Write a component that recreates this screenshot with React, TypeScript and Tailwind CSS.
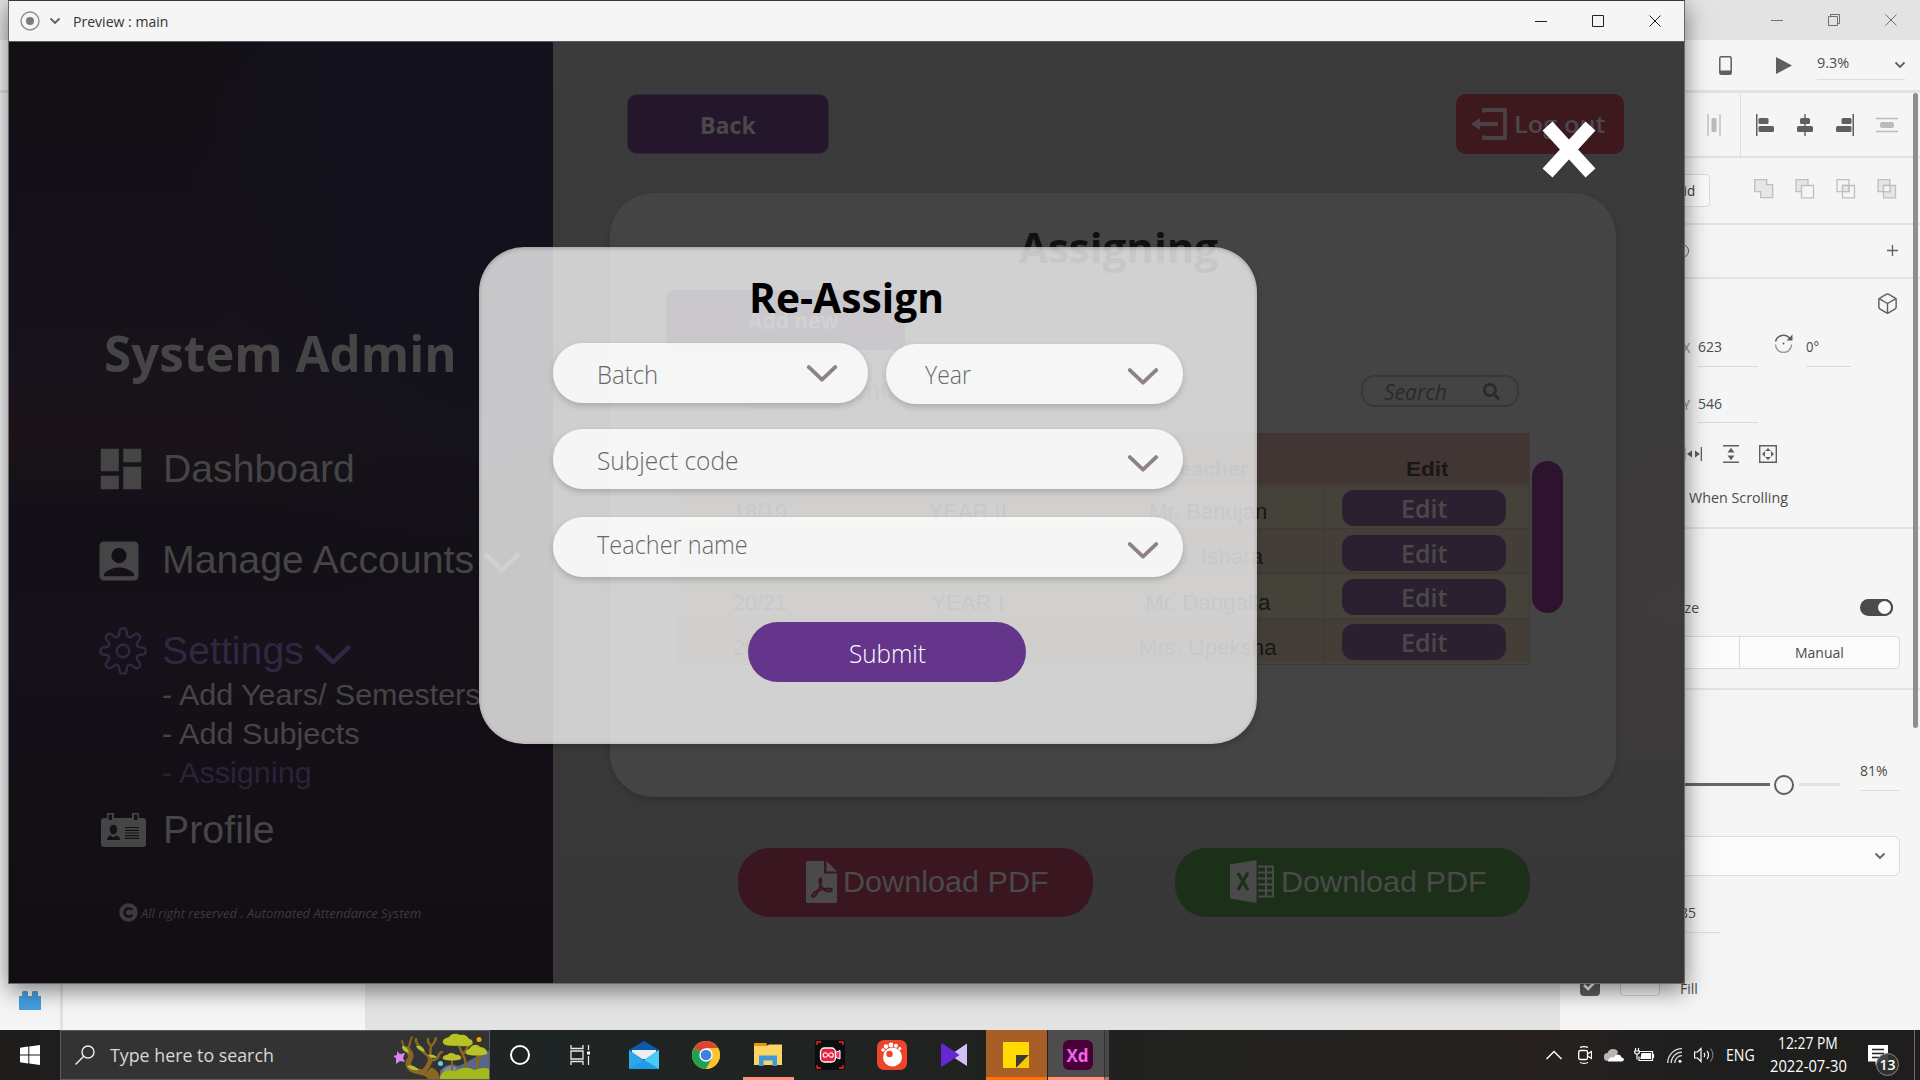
import { useLayoutEffect, useRef, useState } from "react";
import type { ReactNode } from "react";
import { Box } from "lucide-react";
import { MdDashboard, MdAccountBox } from "react-icons/md";
import { FaCopyright, FaSearch } from "react-icons/fa";

const cx = (...parts: (string | undefined | false)[]) => parts.filter(Boolean).join(" ");

/** One line of text condensed or stretched to a given width. */
function Fit({ w, className, children }: { w: number; className?: string; children: ReactNode }) {
  const ref = useRef<HTMLSpanElement>(null);
  const [scale, setScale] = useState(1);
  useLayoutEffect(() => {
    if (ref.current && ref.current.offsetWidth) setScale(w / ref.current.offsetWidth);
  }, [w]);
  return (
    <span className={cx("block shrink-0 whitespace-nowrap", className)} style={{ width: w }}>
      <span ref={ref} className="inline-block origin-left" style={{ transform: `scaleX(${scale})` }}>
        {children}
      </span>
    </span>
  );
}

const segoe = "font-['Open_Sans','Noto_Sans',sans-serif]";
const arial = "font-['Liberation_Sans',Arial,sans-serif]";

/* ------------------------------------------------------------------ icons */

function Chevron({ className, sw = 4 }: { className: string; sw?: number }) {
  return (
    <svg viewBox="0 0 36 20" className={cx("shrink-0", className)} fill="none" stroke="currentColor" strokeWidth={sw} strokeLinecap="round" strokeLinejoin="round">
      <path d="M2.5 2.5 18 17.2 33.5 2.5" />
    </svg>
  );
}

function SmallChevron({ className }: { className?: string }) {
  return (
    <svg viewBox="0 0 12 8" className={cx("h-2 w-3 shrink-0", className)} fill="none" stroke="#5f5f5f" strokeWidth="1.8">
      <path d="M1.5 1.5 6 6l4.500-4.500" />
    </svg>
  );
}

function WindowControls({ restore, className }: { restore?: boolean; className?: string }) {
  return (
    <div className={cx("flex items-center gap-[45px]", className)}>
      <svg className="size-3" viewBox="0 0 12 12" stroke="currentColor" fill="none"><path d="M0 6.500h12" /></svg>
      <svg className="size-3" viewBox="0 0 12 12" stroke="currentColor" fill="none">
        {restore ? <path d="M.5 2.500h9v9h-9zM2.500 2.500v-2h9v9h-2" /> : <path d="M.5.5h11v11H.5z" />}
      </svg>
      <svg className="size-3" viewBox="0 0 12 12" stroke="currentColor" fill="none"><path d="m.5.5 11 11m0-11-11 11" /></svg>
    </div>
  );
}

const gearPath = (() => {
  let d = "";
  for (let i = 0; i <= 240; i++) {
    const t = (i / 240) * Math.PI * 2;
    const r = 18.900 + 3.700 * (Math.tanh(1.800 * Math.cos(8 * t)) / 0.947);
    d += `${i ? "L" : "M"}${(24 + r * Math.cos(t)).toFixed(2)} ${(24 + r * Math.sin(t)).toFixed(2)}`;
  }
  return d + "Z";
})();

function Gear() {
  return (
    <svg viewBox="0 0 48 48" className="size-12 shrink-0" fill="none" stroke="currentColor" strokeWidth="2.4">
      <path d={gearPath} />
      <circle cx="24" cy="24" r="6.300" />
    </svg>
  );
}

function IdCard() {
  return (
    <svg viewBox="0 0 45 34" className="h-[34px] w-[45px] shrink-0">
      <path fill="#454545" d="M3 5h3V0h7v5h18V0h7v5h4a3 3 0 0 1 3 3v23a3 3 0 0 1-3 3H3a3 3 0 0 1-3-3V8a3 3 0 0 1 3-3z" />
      <path fill="#15101a" d="M7.500 1.500h3.500V7H7.500zM33 1.500h3.500V7H33z" />
      <ellipse cx="12.500" cy="16.500" rx="3.700" ry="4.800" fill="#15101a" />
      <path fill="#15101a" d="M6 27c0-3 2-4 4-4.500l2.500 2 2.500-2c2 .5 4 1.500 4 4.500z" />
      <path stroke="#15101a" strokeWidth="1.200" d="M24 14.500h14M24 17.300h14M24 20h14M24 22.700h14M24 25.300h14" />
    </svg>
  );
}

function PdfIcon() {
  return (
    <svg viewBox="0 0 31 42" className="h-[42px] w-[31px] shrink-0">
      <path fill="#4a4a4a" d="M1.500 0H18v12.500h13V40.500a1.500 1.500 0 0 1-1.500 1.500h-28A1.500 1.500 0 0 1 0 40.500v-39A1.500 1.500 0 0 1 1.500 0z" />
      <path fill="#4a4a4a" d="M20.500 0 31 10.500H20.500z" />
      <path fill="none" stroke="#3a1620" strokeWidth="2" strokeLinejoin="round" d="M14.500 17.500c-1.800 0-1.300 4 .2 6.800 1.500 3 4.500 6 8.500 6.200 3.500 0 3.500-3-.2-3-4 0-9 1-12.500 2.700-4 2-5.500 5.300-3.700 5.600 2 .2 4.700-4 6.500-8.500 1.500-3.500 3-9.800 1.200-9.800z" />
    </svg>
  );
}

function ExcelIcon() {
  return (
    <svg viewBox="0 0 44 43" className="h-[43px] w-11 shrink-0">
      <path fill="#4a4a4a" d="M0 4.500 26.500 0v43L0 38.500z" />
      <path fill="none" stroke="#1c3019" strokeWidth="3.200" d="m8 13 10 17M18 12.500 8 30" />
      <path fill="none" stroke="#4a4a4a" strokeWidth="2" d="M28 6.500h15v30H28M28 12.500h15M28 18.500h15M28 24.500h15M28 30.500h15M36 6.500v30" />
    </svg>
  );
}

function LogoutIcon() {
  return (
    <svg viewBox="0 0 36 32" className="h-8 w-9 shrink-0" fill="none" stroke="#4a4244" strokeWidth="3.800">
      <path d="M13 4.500V2h21v28H13v-2.500M27 16H7" />
      <path d="M0 16 9 10v12z" fill="#4a4244" stroke="none" />
    </svg>
  );
}

/* ------------------------------------------------- Adobe XD in the back */

const Hr = () => <div className="h-0.5 shrink-0 bg-[#e2e2e2]" />;

function PropertyPanel() {
  return (
    <aside className={cx("flex w-[360px] shrink-0 flex-col bg-[#f5f5f5] text-[14px] text-[#4b4b4b]", segoe)}>
      <div className="flex h-[63px] shrink-0 items-center pl-[147px]">
        <svg className="h-[22px] w-3.5" viewBox="0 0 14 22"><path d="M1 0v22M13 0v22" stroke="#bbb" strokeWidth="1.300" /><rect x="4.500" y="4" width="5" height="14" rx="1.500" fill="#bbb" /></svg>
        <div className="ml-[19px] h-full w-px bg-[#dedede]" />
        <div className="ml-[15px] flex items-center gap-[22px]">
          <svg className="h-[22px] w-[18px]" viewBox="0 0 18 22" fill="#5f5f5f"><path d="M0 0h1.500v22H0z" /><rect x="2.500" y="4" width="10" height="6" rx="1.500" /><rect x="2.500" y="12" width="15.500" height="6" rx="1.500" /></svg>
          <svg className="h-[22px] w-[18px]" viewBox="0 0 18 22" fill="#5f5f5f"><path d="M8.300 0h1.400v22H8.300z" /><rect x="4" y="4" width="10" height="6" rx="1.500" /><rect x="1" y="12" width="16" height="6" rx="1.500" /></svg>
          <svg className="h-[22px] w-[18px]" viewBox="0 0 18 22" fill="#5f5f5f"><path d="M16.500 0H18v22h-1.500z" /><rect x="5.500" y="4" width="10" height="6" rx="1.500" /><rect x="0" y="12" width="15.500" height="6" rx="1.500" /></svg>
          <svg className="h-[22px] w-[22px]" viewBox="0 0 22 22"><path d="M0 4.500h22M0 17.500h22" stroke="#bbb" strokeWidth="1.300" /><rect x="4" y="8" width="14" height="6" rx="2" fill="#bbb" /></svg>
        </div>
      </div>
      <Hr />
      <div className="flex h-[65px] shrink-0 items-center">
        <div className="flex h-[33px] w-[150px] items-center justify-end rounded border border-[#dcdcdc] bg-[#fbfbfb] pr-3.5 text-[14.5px] text-[#3c3c3c]"><Fit w={74}>Repeat Grid</Fit></div>
        <svg className="-mt-1 ml-[44px] h-5 w-[144px]" viewBox="0 0 144 20" stroke="#bfbfbf" strokeWidth="1.300" fill="#e6e6e6">
          <path d="M.7.7h12v5h6v13h-12v-6h-6z" />
          <path d="M42 .7h12v12H42z" /><path d="M47.500 6.500h12v12.300h-12z" fill="#f5f5f5" />
          <path d="M83 .7h12v12H83z" fill="none" /><path d="M88.500 6.500h12v12.300h-12z" fill="none" /><path d="M88.500 6.500H95v6.200h-6.500z" />
          <path d="M124 .7h12v12h-12zM129.500 6.500h12v12.300h-12z" /><path d="M129.500 6.500h6.500v6.200h-6.500z" fill="#f5f5f5" />
        </svg>
      </div>
      <Hr />
      <div className="flex h-[52px] shrink-0 items-center">
        <span className="ml-[115px] size-3.5 rounded-full border border-[#5f5f5f]" />
        <svg className="ml-[198px] size-[11px] -mt-0.5" viewBox="0 0 11 11" stroke="#5f5f5f" strokeWidth="1.300"><path d="M5.500 0v11M0 5.500h11" /></svg>
      </div>
      <Hr />
      <div className="flex h-12 shrink-0 items-center justify-end pr-[21px]">
        <Box className="size-[23px]" color="#5f5f5f" strokeWidth={1.500} />
      </div>
      <div className="flex h-10 shrink-0 items-center">
        <Fit w={7} className="ml-[123px] text-[#8b8b8b]">X</Fit>
        <div className="ml-2 flex h-10 w-[60px] items-center border-b border-[#d9d9d9]"><Fit w={24}>623</Fit></div>
        <svg viewBox="0 0 19 19" className="ml-4 -mt-2 size-[19px]" fill="none" stroke="#5f5f5f" strokeWidth="1.400"><path d="M1.500 7.500A8 8 0 0 1 16 5" /><path d="M17.500 10.500A8 8 0 0 1 1.500 10.500" stroke="#999" /><path d="M18.500.5v6h-6z" fill="#5f5f5f" stroke="none" /><circle cx="9.500" cy="9.500" r="1" fill="#5f5f5f" stroke="none" /></svg>
        <div className="ml-[13px] flex h-10 w-[45px] items-center border-b border-[#d9d9d9]"><Fit w={13}>0°</Fit></div>
      </div>
      <div className="mt-[18px] flex h-[38px] shrink-0 items-center">
        <Fit w={7} className="ml-[123px] text-[#8b8b8b]">Y</Fit>
        <div className="ml-2 flex h-[38px] w-[60px] items-center border-b border-[#d9d9d9]"><Fit w={24}>546</Fit></div>
      </div>
      <div className="mt-[22px] flex h-[18px] shrink-0 items-center pl-[124px]">
        <svg className="h-[18px] w-[18px]" viewBox="0 0 18 18" fill="#5f5f5f"><path d="M0 2h1.300v14H0zM16.700 2H18v14h-1.300zM8 5.500v7L3 9zM11 5.500v7L16 9z" /></svg>
        <svg className="ml-[21px] h-[18px] w-4" viewBox="0 0 16 18" fill="#5f5f5f"><path d="M0 0h16v1.500H0zM0 16.500h16V18H0zM4.500 7.500h7L8 2.800zM4.500 10.500h7L8 15.200z" /></svg>
        <svg className="ml-[20px] size-[18px]" viewBox="0 0 18 18" fill="#5f5f5f"><path d="M.7.7h16.600v16.600H.7z" fill="none" stroke="#5f5f5f" strokeWidth="1.400" /><path d="M6 6h6L9 3zM6 12h6l-3 3zM6 6v6L3 9zM12 6v6l3-3z" /></svg>
      </div>
      <div className="mt-[25px] flex h-[18px] shrink-0 items-center pl-[129px]"><Fit w={99}>When Scrolling</Fit></div>
      <div className="mt-[21px]"><Hr /></div>
      <div className="mt-[69px] flex h-[18px] shrink-0 items-center">
        <div className="w-[139px] text-right">Responsive Resize</div>
        <div className="ml-[161px] flex h-[17px] w-[33px] justify-end rounded-full bg-[#4b4b4b]"><span className="size-[17px] rounded-full border-2 border-[#4b4b4b] bg-[#f9f9f9]" /></div>
      </div>
      <div className="mt-5 flex h-[33px] w-[340px] shrink-0 rounded border border-[#dcdcdc] bg-[#fbfbfb]">
        <div className="w-[179px] border-r border-[#dcdcdc]" />
        <div className="flex flex-1 items-center justify-center"><Fit w={49}>Manual</Fit></div>
      </div>
      <div className="mt-[19px]"><Hr /></div>
      <div className="mt-[74px] flex h-[27px] shrink-0 items-start">
        <div className="mt-[19px] flex items-center">
          <div className="h-[3px] w-[210px] bg-[#666]" />
          <div className="-my-3 ml-1 size-5 rounded-full border-2 border-[#5f5f5f]" />
          <div className="ml-[5px] h-[3px] w-[41px] bg-[#e2e2e2]" />
        </div>
        <div className="ml-5 h-[27px] w-10 border-b border-[#dcdcdc]"><Fit w={28} className="-mt-[3px] leading-5">81%</Fit></div>
      </div>
      <div className="mt-[45px] flex h-10 w-[340px] shrink-0 items-center justify-end rounded-md border border-[#dcdcdc] bg-[#fbfbfb] pr-[13px]">
        <SmallChevron />
      </div>
      <div className="mt-[26px] flex h-[31px] w-40 shrink-0 justify-end border-b border-[#dcdcdc] pr-6 leading-[22px]"><Fit w={24}>285</Fit></div>
      <div className="mt-[43px] flex h-5 shrink-0 items-center pl-5">
        <div className="flex size-5 items-center justify-center rounded bg-[#5f5f5f]">
          <svg className="size-4" viewBox="0 0 16 16" fill="none" stroke="#fff" strokeWidth="2.600"><path d="m2 7 4 4 8-8" /></svg>
        </div>
        <div className="ml-5 h-5 w-10 rounded border border-[#d0d0d0] bg-[#fafafa]" />
        <Fit w={18} className="ml-5 mt-1">Fill</Fit>
      </div>
    </aside>
  );
}

function XdWindow() {
  return (
    <div className="flex h-[1030px] w-full flex-col bg-[#e3e3e3]">
      <div className="flex h-10 shrink-0 items-center justify-end pr-[23px] text-[#6e6e6e]"><WindowControls restore /></div>
      <div className={cx("flex h-[50px] shrink-0 items-center justify-end bg-[#f5f5f5] pr-[15px]", segoe)}>
        <svg className="mr-[44px] h-[19px] w-[13px]" viewBox="0 0 13 19"><rect x=".8" y=".8" width="11.400" height="17.400" rx="1.500" fill="none" stroke="#5f5f5f" strokeWidth="1.500" /><path d="M1 14.500h11V18H1z" fill="#5f5f5f" /></svg>
        <svg className="mr-[25px] h-[17px] w-4" viewBox="0 0 16 17"><path d="M0 0l16 8.500L0 17z" fill="#5f5f5f" /></svg>
        <div className="mt-[3px] flex h-[27px] w-[88px] items-start justify-between border-b border-[#dcdcdc] text-[14px] text-[#4b4b4b]"><Fit w={32} className="leading-5">9.3%</Fit><SmallChevron className="mt-[8px] -mr-px" /></div>
      </div>
      <div className="h-[3px] shrink-0 bg-[#e2e2e2]" />
      <div className="flex min-h-0 flex-1 overflow-hidden">
        <div className="flex w-[60px] shrink-0 flex-col justify-end bg-[#f5f5f5] pb-5 pl-[19px]">
          <svg className="h-[19px] w-[22px]" viewBox="0 0 22 19" fill="#469fe0"><path d="M0 5h3V1.500A1.500 1.500 0 0 1 4.500 0h3A1.500 1.500 0 0 1 9 1.500V5h4V1.500A1.500 1.500 0 0 1 14.500 0h3A1.500 1.500 0 0 1 19 1.500V5h3v14H0z" /></svg>
        </div>
        <div className="box-content w-[302px] shrink-0 border-l-[3px] border-[#e2e2e2] bg-[#f5f5f5]" />
        <div className="flex-1" />
        <PropertyPanel />
      </div>
      <div className="absolute top-[93px] left-[1913px] h-[635px] w-[5px] rounded-full bg-[#8e8e8e]" />
    </div>
  );
}

/* ---------------------------------------------------------- Preview: sidebar */

const navText = cx("text-[39px] leading-[48px]", arial);

function Sidebar() {
  return (
    <nav className="flex w-[544px] shrink-0 flex-col bg-[radial-gradient(ellipse_at_85%_2%,#13121c_0%,#13121c_22%,transparent_45%),linear-gradient(to_bottom,#130f14_0%,#16111a_25%,#1a131a_42%,#130f16_53%,#17111a_62%,#130f15_80%,#130e14_100%)] text-[#454545]">
      <Fit w={353} className={cx("mt-[280px] ml-[95px] text-[51px] leading-[60px] font-bold", segoe)}>System Admin</Fit>
      <div className="mt-[63px] flex h-12 shrink-0 items-center pl-[85px]">
        <MdDashboard className="size-[54px] shrink-0" />
        <Fit w={192} className={cx("ml-[15px]", navText)}>Dashboard</Fit>
      </div>
      <div className="mt-[43px] flex h-12 shrink-0 items-center pl-[84px]">
        <MdAccountBox className="mt-0.5 size-[52px] shrink-0" />
        <Fit w={312} className={cx("ml-[17px]", navText)}>Manage Accounts</Fit>
        <Chevron className="mt-[5px] ml-[10px] h-5 w-9" sw={4.500} />
      </div>
      <div className="mt-[43px] flex h-12 shrink-0 items-center pl-[90px] text-[#2f2843]">
        <Gear />
        <Fit w={142} className={cx("ml-[15px]", navText)}>Settings</Fit>
        <Chevron className="mt-[7px] ml-[11px] h-5 w-9" sw={4.500} />
      </div>
      <div className={cx("flex flex-col pl-[153px] text-[30px] leading-[39px]", arial)}>
        <Fit w={319}>- Add Years/ Semesters</Fit>
        <Fit w={197}>- Add Subjects</Fit>
        <Fit w={150} className="text-[#29233a]">- Assigning</Fit>
      </div>
      <div className="mt-[14px] flex h-12 shrink-0 items-center pl-[92px]">
        <IdCard />
        <Fit w={112} className={cx("ml-[17px]", navText)}>Profile</Fit>
      </div>
      <div className="mt-12 flex h-5 shrink-0 items-center pl-[110px] text-[#3b3b3b]">
        <FaCopyright className="size-[19px] shrink-0" />
        <Fit w={280} className={cx("ml-[3px] mt-1 text-[13px] italic", segoe)}>All right reserved . Automated Attendance System</Fit>
      </div>
    </nav>
  );
}

/* ------------------------------------------------------- Preview: main page */

type Row = { batch: string; year: string; yearW: number; teacher: string; teacherW: number; height: string; pad: string; bg: string };

const rows: Row[] = [
  { batch: "18/19", year: "YEAR II", yearW: 78, teacher: "Mr. Banujan", teacherW: 118, height: "h-[45px]", pad: "pt-[10px]", bg: "bg-[#444239]" },
  { batch: "18/19", year: "YEAR II", yearW: 78, teacher: "Mrs. Ishara", teacherW: 111, height: "h-11", pad: "pt-[11px]", bg: "bg-[#443e38]" },
  { batch: "20/21", year: "YEAR I", yearW: 73, teacher: "Mr. Dangalla", teacherW: 126, height: "h-[45px]", pad: "pt-[13px]", bg: "bg-[#444239]" },
  { batch: "20/21", year: "YEAR I", yearW: 73, teacher: "Mrs. Upeksha", teacherW: 138, height: "h-[45px]", pad: "pt-[13px]", bg: "bg-[#443e38]" },
];

const cell = "flex items-center justify-center border-r border-b border-[#3e3934]";

function AssignTable() {
  return (
    <div className={cx("w-[854px] text-[22px] text-[#171717]", arial)}>
      <div className="grid h-[51px] grid-cols-[169px_246px_234px_205px] bg-[#423634] text-[21px] font-bold">
        <div className={cx(cell, "pt-5")}><Fit w={136}>Subject code</Fit></div>
        <div className={cx(cell, "pt-5")}><Fit w={144}>Subject Name</Fit></div>
        <div className={cx(cell, "pt-5")}><Fit w={80}>Teacher</Fit></div>
        <div className={cx(cell, "pt-5")}><Fit w={43}>Edit</Fit></div>
      </div>
      {rows.map((r, i) => (
        <div key={i} className={cx("grid grid-cols-[169px_246px_234px_205px]", r.height, r.bg)}>
          <div className={cx(cell, r.pad)}><Fit w={54}>{r.batch}</Fit></div>
          <div className={cx(cell, r.pad)}><Fit w={r.yearW}>{r.year}</Fit></div>
          <div className={cx(cell, r.pad)}><Fit w={r.teacherW}>{r.teacher}</Fit></div>
          <div className="flex items-start border-r border-b border-[#3e3934] pt-[6px] pl-[17px]">
            <button className={cx("flex h-[36px] w-[164px] items-center justify-center rounded-xl bg-[#2b202f] text-[25px] leading-none font-semibold text-[#4a484b]", segoe)}><Fit w={46}>Edit</Fit></button>
          </div>
        </div>
      ))}
    </div>
  );
}

function MainPage() {
  return (
    <main className="flex flex-1 flex-col bg-[radial-gradient(ellipse_at_100%_60%,#3f3a3b_0%,transparent_30%),linear-gradient(to_bottom,#3b3b3c,#3a3a3a_50%,#373737)]">
      <div className={cx("mt-[52px] flex h-[60px] shrink-0 items-center pl-[74px] text-[24px] text-[#4b484d]", segoe)}>
        <button className="flex h-full w-[202px] items-center justify-center rounded-[10px] border border-[#30263a] bg-[#24172b] pt-px font-bold"><Fit w={56}>Back</Fit></button>
        <button className="ml-[627px] flex h-full w-[168px] items-center rounded-[10px] bg-[#3d191d] pl-[15px] font-semibold"><LogoutIcon /><Fit w={92} className="ml-[4px]">Log out</Fit></button>
      </div>
      <section className="mt-[39px] ml-[57px] h-[604px] w-[1006px] shrink-0 rounded-[43px] bg-[#444] shadow-[0_3px_6px_rgba(0,0,0,0.16)]">
        <Fit w={199} className={cx("ml-[409px] pt-6 text-[42px] leading-[60px] font-bold text-[#101010]", segoe)}>Assigning</Fit>
        <button className={cx("mt-[13px] ml-14 flex h-[60px] w-[239px] items-center rounded-lg bg-[#24172b] pl-[82px] text-[24px] font-bold text-[#4a484b]", segoe)}><Fit w={91}>Add new</Fit></button>
        <div className={cx("mt-[25px] ml-[66px] flex h-8 items-center text-[24px] text-[#2e2e2e]", arial)}>
          <Fit w={62}>Show</Fit>
          <div className="ml-2 flex h-9 w-[98px] items-center rounded-xl border-2 border-[#3d343f] pl-4"><Fit w={26}>10</Fit><Chevron className="ml-3 h-3 w-5" /></div>
          <Fit w={76} className="ml-2">entries</Fit>
          <div className={cx("ml-[433px] flex h-8 w-[158px] items-center rounded-[14px] border-2 border-[#3d343f] pl-[21px] text-[22px] leading-none text-[#2a2a2a] italic", segoe)}>
            <Fit w={63}>Search</Fit>
            <FaSearch className="ml-[36px] size-[17px] shrink-0" />
          </div>
        </div>
        <div className="mt-[26px] ml-[66px] flex items-start">
          <AssignTable />
          <div className="mt-[28px] ml-0.5 h-[152px] w-[31px] rounded-full bg-[#2e132e]" />
        </div>
      </section>
      <div className={cx("mt-[51px] ml-[185px] flex h-[69px] shrink-0 gap-[82px] text-[30px] text-[#4a4a4a]", arial)}>
        <button className="flex w-[355px] items-center rounded-[32px] bg-[#3a1620] pb-0.5 pl-[68px]"><PdfIcon /><Fit w={206} className="ml-[4px]">Download PDF</Fit></button>
        <button className="flex w-[355px] items-center rounded-[32px] bg-[#1c3019] pb-0.5 pl-[55px]"><ExcelIcon /><Fit w={206} className="ml-[5px]">Download PDF</Fit></button>
      </div>
    </main>
  );
}

/* -------------------------------------------------------------- dialog */

type FieldProps = { label: string; w: number; className: string; labelClass?: string; chevronClass?: string };

function Field({ label, w, className, labelClass, chevronClass }: FieldProps) {
  return (
    <div className={cx("flex h-[60px] items-center justify-between rounded-[30px] bg-white/80 pl-11 shadow-[0_3px_6px_rgba(0,0,0,0.18)]", className)}>
      <Fit w={w} className={labelClass}>{label}</Fit>
      <Chevron className={cx("h-[17px] w-8 text-[#8f8285]", chevronClass)} sw={4.500} />
    </div>
  );
}

function ReAssignDialog() {
  return (
    <div className={cx("absolute top-[247px] left-[479px] flex h-[497px] w-[778px] flex-col rounded-[45px] bg-[#f1f1f1]/81 text-[25.5px] font-light text-[#686868] shadow-[0_3px_6px_rgba(0,0,0,0.2),inset_0_1px_4px_rgba(0,0,0,0.25)]", segoe)}>
      <Fit w={195} className="mt-5 ml-[270px] text-[42px] leading-[60px] font-bold text-black">Re-Assign</Fit>
      <div className="mt-4 ml-[74px] flex gap-[18px]">
        <Field label="Batch" w={61} className="w-[315px] pr-[30px]" labelClass="mt-[3px]" chevronClass="mt-px" />
        <Field label="Year" w={46} className="mt-px w-[297px] pr-[24px] pl-[39px]" labelClass="mt-px" chevronClass="mt-1" />
      </div>
      <Field label="Subject code" w={141} className="mt-[25px] ml-[74px] w-[630px] pr-[24px]" labelClass="mt-[3px]" chevronClass="mt-2" />
      <Field label="Teacher name" w={151} className="mt-7 ml-[74px] w-[630px] pr-[24px]" labelClass="-mt-[6px]" chevronClass="mt-[7px]" />
      <button className="mt-[45px] ml-[269px] flex h-[60px] w-[278px] items-center justify-center rounded-[30px] bg-[#623289]/98 pt-0.5 font-[350] text-white"><Fit w={77}>Submit</Fit></button>
    </div>
  );
}

function PreviewWindow() {
  return (
    <div className="absolute top-0 left-2 flex h-[984px] w-[1677px] flex-col border border-[#6a686b] border-t-[#3c383c] bg-[#f5f5f5] shadow-[0_6px_22px_rgba(0,0,0,0.5)]">
      <div className={cx("flex h-10 shrink-0 items-center pr-[23px] pl-[11px] text-[14.5px] text-[#333]", segoe)}>
        <svg className="size-5" viewBox="0 0 20 20"><circle cx="10" cy="10" r="9" fill="none" stroke="#8e8e8e" strokeWidth="1.400" /><circle cx="10" cy="10" r="4" fill="#7a7a7a" /></svg>
        <SmallChevron className="ml-[9px]" />
        <Fit w={95} className="ml-3 mt-px">Preview : main</Fit>
        <WindowControls className="ml-auto text-[#222]" />
      </div>
      <div className="h-px shrink-0 bg-[#5c5a5d]" />
      <div className="flex min-h-0 flex-1"><Sidebar /><MainPage /></div>
    </div>
  );
}

/* -------------------------------------------------------------- taskbar */

function TreeArt() {
  return (
    <svg viewBox="0 0 95 48" className="h-12 w-[95px] shrink-0">
      <path d="M46 40c5-7 12-8 18-5 8-2 14-8 20-10 3-3 7-5 11-5v28H46z" fill="#5a6688" />
      <path d="M48 40c5-6 10-6 15-3l-4 6z" fill="#7c8ba6" />
      <g fill="none" stroke="#8a6622" strokeLinecap="round" strokeLinejoin="round">
        <path d="M37 49c0-7-9-8-15-9-7-2-10-7-6-12 2-4 0-7-3-10" strokeWidth="5.500" />
        <path d="M15 22c-1-3-5-5-6-9M13 18c4-3 2-8 5-12M9 13 8 10" strokeWidth="2" />
        <path d="M30 40c3-4 7-7 6-13" strokeWidth="4.500" />
        <path d="M36 28c-2-5-8-6-10-11-1-4-5-4-4-9M36 26c1-5 0-7 1-11-2-3-4-3-3-7M37 15c3-2 4-4 5-8M35 31c4-3 9-1 10-8l3-2" strokeWidth="2.500" />
        <path d="M42 49c0-4-1-6-4-8" strokeWidth="8" />
        <path d="M71 41c1-8 1-12-2-17l-4-9M70 22l5-8" strokeWidth="2.500" />
        <path d="M58 40V26M83 43V24M83 32l4-7" strokeWidth="2" />
      </g>
      <path d="M13 35c5-2 9 1 12 4-5 1-9 0-12-4zM22 15c5-1 8 2 9 6-5-1-8-3-9-6zM8 15c4 0 6 3 7 7-4-1-7-3-7-7zM34 24c4-1 6 0 9 2-3 2-7 1-9-2z" fill="#a9c53c" />
      <g fill="#b9c224">
        <path d="M49 12c-1-4 3-5 6-6 2-4 8-4 11-2 4-1 8 1 9 4 4 0 5 5 2 6-6 3-12 0-16 1-5-1-9 1-12-3z" />
        <path d="M72 23c-1-4 2-4 4-6 2-4 8-4 10-1 4 0 8 3 7 7-6 2-15 2-21 0z" />
        <path d="M49 28c-1-3 2-4 4-4 3-3 7-2 9 0 3-1 6 2 5 4-5 2-13 2-18 0z" />
      </g>
      <path d="M46 48c0-8 8-10 15-8 7-4 14-4 19-1 6-2 12-3 15-1v10z" fill="#a4ba1c" />
      <path d="m3 20 3 3 5-1-2 5 2 4-5-1-4 3V27l-3-2 4-1z" fill="#dd84f5" />
      <circle cx="85" cy="8.500" r="2.500" fill="#f5a30a" /><circle cx="46.500" cy="32.500" r="2.500" fill="#5fd0e8" />
    </svg>
  );
}

function Taskbar() {
  return (
    <div className={cx("flex h-[50px] w-full items-stretch bg-[linear-gradient(to_right,#1f1d1c,#1f2424_28%,#20221f_55%,#272220_80%,#1d1e1d_90%,#1f1e1d)] text-[16px] text-[#f0f0f0]", segoe)}>
      <div className="flex w-[60px] shrink-0 items-center justify-center">
        <svg className="size-5" viewBox="0 0 20 20" fill="#fff"><path d="M0 2.800 8.300 1.500v8H0zM9.300 1.400 20 0v9.500H9.300zM0 10.500h8.300v8L0 17.300zM9.300 10.500H20V20L9.300 18.600z" /></svg>
      </div>
      <div className="flex w-[430px] shrink-0 items-center border border-[#5c5c5c] bg-[#333] pl-3.5">
        <svg className="size-5 shrink-0" viewBox="0 0 20 20" fill="none" stroke="#eee" strokeWidth="1.400"><circle cx="13" cy="7" r="6" /><path d="M8.500 11.500.5 19.500" /></svg>
        <Fit w={164} className="ml-[15px] text-[19px] text-[#d8d8d8]">Type here to search</Fit>
        <div className="ml-auto"><TreeArt /></div>
      </div>
      <div className="flex w-[60px] shrink-0 items-center justify-center"><span className="size-5 rounded-full border-[2.5px] border-white" /></div>
      <div className="flex w-[60px] shrink-0 items-center justify-center">
        <svg className="size-5" viewBox="0 0 20 20" fill="none" stroke="#e8e8e8" strokeWidth="1.300"><path d="M1 0v3.500h12V0M1 6h12v8H1zM1 20v-3.500h12V20M18.500 0v5M18.500 11v9" /><path d="M17 6.500h3v3h-3z" fill="#fff" stroke="none" /></svg>
      </div>
      <div className="flex w-[68px] shrink-0 items-center justify-center">
        <svg className="h-[28px] w-[30px]" viewBox="0 0 30 28"><path d="M0 9 15 0l15 9v6H0z" fill="#0c5ab0" /><path d="M3 9h24v9H3z" fill="#eee" /><path d="M0 9l15 10L30 9v19H0z" fill="#2ba7ea" /><path d="M30 28 15 19 30 9z" fill="#48cbf5" /><path d="m15 19 15 9H0z" fill="#229be6" /></svg>
      </div>
      <div className="flex w-[56px] shrink-0 items-center justify-center">
        <svg className="size-7" viewBox="0 0 28 28"><circle cx="14" cy="14" r="14" fill="#f6bf26" /><path d="M14 14 1.900 7A14 14 0 0 1 26.100 7H14z" fill="#dc4437" /><path d="M1.900 7A14 14 0 0 0 14 28l6-10.500-6-3.500z" fill="#1fa055" /><path d="M14 28a14 14 0 0 0 12.100-21H14l6 10.500z" fill="#f9c52b" /><circle cx="14" cy="14" r="6.700" fill="#fff" /><circle cx="14" cy="14" r="5.300" fill="#3f7fea" /></svg>
      </div>
      <div className="ml-[9px] flex w-[51px] shrink-0 items-center justify-center border-b-[3px] border-[#ff9376]">
        <svg className="mt-px mr-0.5 h-[23px] w-7" viewBox="0 0 28 23"><path d="M0 0h12l2 3H0z" fill="#e09a06" /><path d="M0 3h13l2-1.500h13V22H0z" fill="#fcd462" /><path d="M5 12.500h18V23h-4.500v-5.500h-9V23H5z" fill="#3f97dc" /></svg>
      </div>
      <div className="flex w-[72px] shrink-0 items-center justify-center">
        <svg className="size-[30px]" viewBox="0 0 30 30"><rect width="30" height="30" rx="3" fill="#0b0d0e" /><path d="M2 5V2h4M24 2h4v3M2 25v3h4M24 28h4v-3" fill="none" stroke="#f22" strokeWidth="1.300" /><path d="m19 13 6-2.500v8.500l-6-2.500" fill="#f23a55" stroke="#fff" strokeWidth="1" /><rect x="5.500" y="8" width="15" height="14" rx="4" fill="#e8203f" stroke="#fff" strokeWidth="1.300" /><path d="M13.500 15c-1.300-1.500-2-2.300-3-2.300a2.300 2.300 0 0 0 0 4.600c2 0 3.500-4.600 5.500-4.600a2.300 2.300 0 0 1 0 4.600c-1 0-1.500-.8-2.500-2.300z" fill="none" stroke="#fff" strokeWidth="1.100" /></svg>
      </div>
      <div className="flex w-[52px] shrink-0 items-center justify-center">
        <svg className="size-[30px]" viewBox="0 0 30 30"><rect width="30" height="30" rx="7" fill="#ef442c" /><g fill="#fff"><circle cx="15.500" cy="17" r="9.500" /><circle cx="6" cy="10" r="1.800" /><circle cx="9" cy="6.500" r="2.300" /><circle cx="14" cy="5" r="2.400" /><circle cx="19" cy="5.800" r="2" /><circle cx="22.800" cy="8.500" r="1.600" /></g><circle cx="12.500" cy="14" r="3.200" fill="#ef442c" /></svg>
      </div>
      <div className="flex w-[68px] shrink-0 items-center justify-center">
        <svg className="ml-1 h-6 w-[27px]" viewBox="0 0 27 24"><path d="M26 .5v22.500L13.500 15V9z" fill="#d3c0fb" /><path d="M1.500.5 18.500 12l-17 11.500A1 1 0 0 1 0 22.500v-21A1 1 0 0 1 1.500.5z" fill="#6527cf" /></svg>
      </div>
      <div className="flex w-[61px] shrink-0 items-center justify-center border-b-[3px] border-[#ff7300] bg-[#a75f27]">
        <svg className="mt-0.5 mr-0.5 size-[26px]" viewBox="0 0 26 26"><path d="M1 0h24a1 1 0 0 1 1 1v12L13 26H1a1 1 0 0 1-1-1V1a1 1 0 0 1 1-1z" fill="#ffda00" /><path d="M13 13h13L13 26z" fill="#3d3a35" /><path d="M26 13v13H13z" fill="#f5cb00" /></svg>
      </div>
      <div className="ml-px flex w-14 shrink-0 items-center justify-center border-b-[3px] border-[#ff9376] bg-[#4d4d4d] pl-[3px]">
        <span className="mt-[3px] flex size-[30px] items-center justify-center rounded-md bg-[#470137] text-[17px] font-bold text-[#f066ee]"><Fit w={22} className="leading-none">Xd</Fit></span>
      </div>
      <div className="w-[5px] shrink-0 border-b-[3px] border-l border-[#b5705d] border-l-[#333] bg-[#484848]" />
      <div className="ml-auto flex shrink-0 items-center text-white">
        <svg className="h-2.5 w-4" viewBox="0 0 16 10" fill="none" stroke="#fff" strokeWidth="1.500"><path d="M.5 9 8 1.500 15.500 9" /></svg>
        <svg className="ml-4 h-[18px] w-3.5" viewBox="0 0 14 18" fill="none" stroke="#fff" strokeWidth="1.300"><rect x=".7" y="4.500" width="8.800" height="9" rx="1.500" /><path d="m9.500 8 4-2.500v7L9.500 10M2 1.500c2-1 6-1 8 0M2 16.500c2 1 6 1 8 0" /></svg>
        <svg className="ml-3 h-3.5 w-5" viewBox="0 0 20 14"><path d="M4 13a4 4 0 0 1-.5-8A6 6 0 0 1 14 3.500c0 3-6 9.500-10 9.500z" fill="#b5b5b5" /><path d="M4 13.500c0-4 4-5 6-4 1-4 7-4 7.500 0 3 0 3.500 4 0 4z" fill="#fff" /></svg>
        <svg className="ml-2.5 h-3.5 w-[21px]" viewBox="0 0 21 14" fill="none" stroke="#fff" strokeWidth="1.200"><path d="M6 3.500h12.500v9H5v-4" /><path d="M8 5.500h8.500v5H7z" fill="#fff" /><path d="M19.500 6v4M1.500 0v3M4.500 0v3M.7 3h4.600v2L3 6.500.7 5zM3 6.500v5" /></svg>
        <svg className="ml-3 h-[15px] w-[15px]" viewBox="0 0 15 15" fill="none" stroke="#ddd" strokeWidth="1.300"><path d="M.7 15A14.300 14.300 0 0 1 15 .7M4.200 15A10.800 10.800 0 0 1 15 4.200M7.700 15A7.300 7.300 0 0 1 15 7.700" /><circle cx="13" cy="13.200" r="1.500" fill="#fff" stroke="none" /></svg>
        <svg className="ml-3 h-4 w-5" viewBox="0 0 20 16" fill="none" stroke="#fff" strokeWidth="1.200"><path d="M.6 5h3L7 1.500v13L3.600 11h-3z" /><path d="M10 6c1 1 1 3 0 4M13 4c2 2 2 6 0 8" /><path d="M16.500 1.500c3 4 3 9 0 13" stroke="#777" /></svg>
        <Fit w={29} className="ml-3">ENG</Fit>
        <div className="ml-[14px] flex w-[78px] flex-col items-center text-[15.5px] leading-[23px]">
          <Fit w={60}>12:27 PM</Fit>
          <Fit w={77}>2022-07-30</Fit>
        </div>
        <div className="relative ml-[21px] h-[30px] w-8">
          <svg className="mt-[5px] h-5 w-5" viewBox="0 0 20 20"><path d="M0 0h20v16.500h-9L7.500 20v-3.500H0z" fill="#fff" /><path d="M4 4.500h12M4 8.500h12M4 12.500h7" stroke="#222" strokeWidth="1.300" /></svg>
          <span className="absolute top-[13px] left-2 flex size-[23px] items-center justify-center rounded-full border border-[#8a8a8a] bg-[#333]/90 text-[14px] font-semibold">13</span>
        </div>
        <div className="mr-[5px] ml-[14px] h-[50px] w-px bg-[#6f6f6f]" />
      </div>
    </div>
  );
}

export default function App() {
  return (
    <div className="relative h-[1080px] w-[1920px] overflow-hidden">
      <XdWindow />
      <PreviewWindow />
      <ReAssignDialog />
      <svg className="absolute top-[121px] left-[1542px] h-[57px] w-[54px]" viewBox="0 0 54 57" stroke="#fff" strokeWidth="13.500">
        <path d="m5.500 5 43 47M48.500 5l-43 47" />
      </svg>
      <Taskbar />
    </div>
  );
}
